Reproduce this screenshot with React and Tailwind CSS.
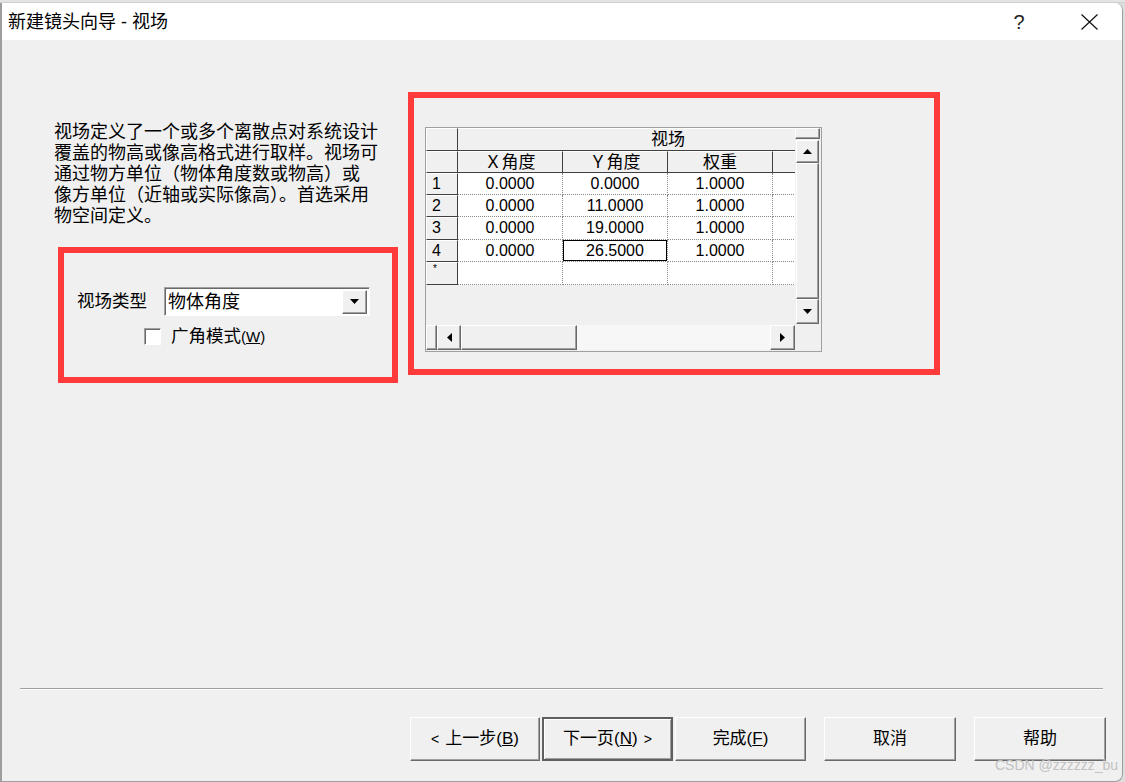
import React from 'react';

const font = "font-['Liberation_Sans','Noto_Sans_CJK_SC',sans-serif]";
const raised =
  'bg-[#f0f0f0] border border-t-white border-l-white border-r-[#696969] border-b-[#696969] shadow-[inset_-1px_-1px_0_#a0a0a0]';
const sunken =
  'border border-t-[#a0a0a0] border-l-[#a0a0a0] border-r-white border-b-white shadow-[inset_1px_1px_0_#696969]';

const Arrow = ({ dir }) => {
  const pts = {
    up: '0,5 9,5 4.5,0',
    down: '0,0 9,0 4.5,5',
    left: '5,0 5,9 0,4.5',
    right: '0,0 0,9 5,4.5',
  }[dir];
  const vertical = dir === 'up' || dir === 'down';
  return (
    <svg width={vertical ? 9 : 5} height={vertical ? 5 : 9} viewBox={vertical ? '0 0 9 5' : '0 0 5 9'}>
      <polygon points={pts} fill="#000" />
    </svg>
  );
};

const rows = [
  { n: '1', x: '0.0000', y: '0.0000', w: '1.0000', h: 'h-[22px]' },
  { n: '2', x: '0.0000', y: '11.0000', w: '1.0000', h: 'h-[22px]' },
  { n: '3', x: '0.0000', y: '19.0000', w: '1.0000', h: 'h-[23px]' },
  { n: '4', x: '0.0000', y: '26.5000', w: '1.0000', h: 'h-[22px]', focus: true },
];

const rowHead =
  'w-[32px] shrink-0 bg-[#f0f0f0] border-t border-l border-r border-b border-t-white border-l-white border-r-[#404040] border-b-[#404040]';
const colHead =
  'w-[105px] shrink-0 bg-[#f0f0f0] border-t border-r border-b border-t-white border-r-[#404040] border-b-[#404040] flex items-center justify-center text-[17px] leading-none';
const cell =
  'w-[105px] shrink-0 bg-white border-r border-b border-dotted border-[#8a8a8a] flex items-center justify-center text-[16px] leading-none';

const FieldGrid = () => (
  <div className="mt-[29px] ml-[11px] w-[397px] h-[225px] border border-[#a0a0a0] bg-[#f0f0f0] flex flex-col">
    <div className="flex h-[197px]">
      <div className="w-[369px] overflow-hidden">
        <div className="w-[452px]">
          <div className="flex h-[23px]">
            <div className={rowHead} />
            <div className="w-[420px] shrink-0 bg-[#f0f0f0] border-t border-b border-t-white border-b-[#404040] flex items-center justify-center text-[17px] leading-none">
              视场
            </div>
          </div>
          <div className="flex h-[22px]">
            <div className={`${rowHead} border-t-[#f0f0f0]`} />
            <div className={colHead}>Ｘ角度</div>
            <div className={colHead}>Ｙ角度</div>
            <div className={colHead}>权重</div>
            <div className={colHead} />
          </div>
          {rows.map((r) => (
            <div key={r.n} className={`flex ${r.h}`}>
              <div className={`${rowHead} pl-[5px] text-[16px] leading-[20px]`}>{r.n}</div>
              <div className={cell}>{r.x}</div>
              <div className={cell}>
                {r.focus ? (
                  <div className="w-full h-full border border-black flex items-center justify-center">{r.y}</div>
                ) : (
                  r.y
                )}
              </div>
              <div className={cell}>{r.w}</div>
              <div className={cell} />
            </div>
          ))}
          <div className="flex h-[23px]">
            <div className={`${rowHead} pl-[6px] text-[10px] leading-[12px]`}>*</div>
            <div className={cell} />
            <div className={cell} />
            <div className={cell} />
            <div className={cell} />
          </div>
        </div>
      </div>
      <div className="w-[26px] flex flex-col pr-[1px]">
        <div className={`h-[11px] ${raised}`} />
        <div className={`mt-[1px] mx-[1px] h-[23px] ${raised} flex items-center justify-center`}>
          <Arrow dir="up" />
        </div>
        <div className={`mx-[1px] flex-1 ${raised}`} />
        <div className={`mx-[1px] mb-[1px] h-[25px] ${raised} flex items-center justify-center`}>
          <Arrow dir="down" />
        </div>
      </div>
    </div>
    <div className="flex h-[25px]">
      <div className={`w-[11px] ${raised}`} />
      <div className={`w-[24px] ${raised} flex items-center justify-center`}>
        <Arrow dir="left" />
      </div>
      <div className={`w-[116px] ${raised}`} />
      <div className="w-[193px] bg-[#f7f7f7]" />
      <div className={`w-[25px] ${raised} flex items-center justify-center`}>
        <Arrow dir="right" />
      </div>
      <div className="w-[26px] bg-[#f0f0f0]" />
    </div>
  </div>
);

const Btn = ({ children, w, def, className = '' }) => (
  <div
    className={`${w} h-[44px] shrink-0 flex items-center justify-center text-[17px] ${
      def
        ? 'bg-[#f0f0f0] border-2 border-[#5f5f5f] shadow-[inset_1px_1px_0_#fff,inset_-1px_-1px_0_#a0a0a0]'
        : raised
    } ${className}`}
  >
    {children}
  </div>
);

const App = () => {
  return (
    <div className={`relative w-[1125px] h-[782px] overflow-hidden bg-[#dcdcdc] text-black ${font}`}>
      <div className="h-[3px] bg-[#e4e4e4] border-b border-[#d0d0d0]" />
      <div className="w-[1123px] h-[779px] flex flex-col bg-[#f0f0f0] border-l-2 border-r border-b border-[#9d9d9d] rounded-tr-[8px] rounded-br-[8px] overflow-hidden">
        <div className="h-[37px] shrink-0 bg-white flex items-center">
          <div className="pl-[6px] text-[18px] leading-none">新建镜头向导 - 视场</div>
          <div className="ml-auto w-[46px] text-center text-[20px] leading-none text-[#222]">?</div>
          <div className="ml-[24px] mr-[10px] w-[46px] flex items-center justify-center">
            <svg width="17" height="16" viewBox="0 0 17 16">
              <path d="M0.5 0.5 L16.5 15.5 M16.5 0.5 L0.5 15.5" stroke="#111" strokeWidth="1.2" fill="none" />
            </svg>
          </div>
        </div>

        <div className="flex-1 flex items-start">
          <div className="w-[406px] shrink-0 flex flex-col">
            <div className="mt-[82px] ml-[52px] text-[18px] leading-[21px] whitespace-nowrap">
              <div>视场定义了一个或多个离散点对系统设计</div>
              <div>覆盖的物高或像高格式进行取样。视场可</div>
              <div>通过物方单位（物体角度数或物高）或</div>
              <div>像方单位（近轴或实际像高）。首选采用</div>
              <div>物空间定义。</div>
            </div>
            <div className="mt-[20px] ml-[56px] w-[340px] h-[136px] border-[6px] border-[#fe3a3a] flex flex-col pt-[34px] pl-[13px]">
              <div className="flex items-center">
                <div className="w-[87px] text-[17.5px] leading-none">视场类型</div>
                <div className={`w-[206px] h-[29px] bg-white ${sunken} flex items-center`}>
                  <span className="flex-1 pl-[3px] text-[18px] leading-none">物体角度</span>
                  <div className={`w-[25px] h-[24px] mr-[2px] ${raised} flex items-center justify-center`}>
                    <Arrow dir="down" />
                  </div>
                </div>
              </div>
              <div className="mt-[12px] ml-[67px] flex items-center">
                <div className={`w-[17px] h-[17px] bg-white ${sunken}`} />
                <span className="ml-[10px] text-[17.5px] leading-none">
                  广角模式<span className="text-[15px]">(<span className="underline">W</span>)</span>
                </span>
              </div>
            </div>
          </div>
          <div className="mt-[52px] w-[532px] h-[283px] border-[6px] border-[#fe3a3a]">
            <FieldGrid />
          </div>
        </div>

        <div className="ml-[18px] w-[1083px] h-[2px] shrink-0 border-t border-t-[#a0a0a0] border-b border-b-white" />

        <div className="shrink-0 pt-[27px] pb-[20px] pl-[408px] flex">
          <Btn w="w-[130px]">
            <span className="text-[14px] mr-[6px]">&lt;</span>上一步(<span className="underline">B</span>)
          </Btn>
          <Btn w="w-[131px]" def className="ml-[2px]">
            下一页(<span className="underline">N</span>)<span className="text-[14px] ml-[6px]">&gt;</span>
          </Btn>
          <Btn w="w-[131px]" className="ml-[2px]">
            完成(<span className="underline">F</span>)
          </Btn>
          <Btn w="w-[132px]" className="ml-[18px]">
            取消
          </Btn>
          <Btn w="w-[132px]" className="ml-[18px]">
            帮助
          </Btn>
        </div>
      </div>
      <div className="absolute left-[995px] top-[757px] text-[14px] leading-[16px] text-[#c2c2c2] font-['Liberation_Sans',sans-serif]">
        CSDN @zzzzzz_bu
      </div>
    </div>
  );
};

export default App;
